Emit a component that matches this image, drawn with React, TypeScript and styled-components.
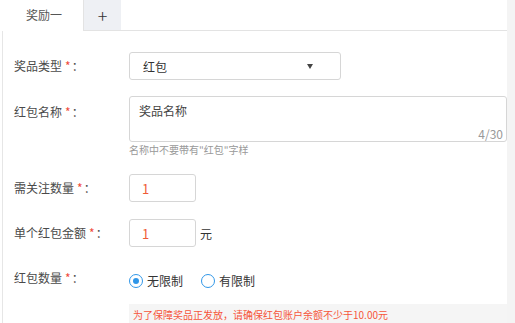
import React from "react";
import styled, { createGlobalStyle } from "styled-components";

const Global = createGlobalStyle`
  html, body { margin: 0; padding: 0; background: #fff; }
  body { font-family: "Noto Sans CJK SC", "Noto Sans", sans-serif; font-size: 12px; color: #333; }
`;

const Page = styled.div`
  display: flex;
  width: 515px;
  height: 323px;
  overflow: hidden;
`;

const Main = styled.div`
  width: 507px;
  display: flex;
  flex-direction: column;
`;

const Strip = styled.div`
  width: 8px;
  background: #f4f4f4;
`;

const TabBar = styled.div`
  display: flex;
  height: 31px;
`;

const Tab = styled.div<{ $active?: boolean }>`
  box-sizing: border-box;
  height: 31px;
  display: flex;
  align-items: center;
  justify-content: center;
  ${(p) =>
    p.$active
      ? `width: 83px; background: #fff; color: #555; font-size: 12px; padding: 0 0 3px 5px;`
      : `width: 38px; background: #eef0f4; border-left: 1px solid #e3e3e3; border-bottom: 1px solid #e3e3e3; color: #333; font-size: 18px; font-weight: 300;`}
`;

const TabFill = styled.div`
  flex: 1;
  border-bottom: 1px solid #e3e3e3;
`;

const Body = styled.div`
  flex: 1;
  margin-left: 2px;
  border-left: 1px solid #e6e6e6;
  padding-left: 11px;
  display: flex;
  flex-direction: column;
`;

const Row = styled.div<{ $top: number; $align?: string }>`
  display: flex;
  align-items: ${(p) => p.$align || "center"};
  margin-top: ${(p) => p.$top}px;
`;

const Label = styled.div<{ $pt?: number }>`
  width: 115px;
  flex: none;
  color: #4a4a4a;
  font-size: 12px;
  line-height: 16px;
  padding-top: ${(p) => p.$pt || 0}px;
  white-space: nowrap;
`;

const Star = styled.span`
  color: #f04b3a;
  margin-left: 3px;
  margin-right: 1px;
`;

const Select = styled.div`
  box-sizing: border-box;
  width: 212px;
  height: 28px;
  border: 1px solid #d6d6d6;
  border-radius: 3px;
  display: flex;
  align-items: center;
  justify-content: space-between;
  padding: 0 27px 0 13px;
  color: #333;
`;

const Caret = styled.span`
  width: 0;
  height: 0;
  border-left: 3px solid transparent;
  border-right: 3px solid transparent;
  border-top: 5px solid #444;
  margin-top: 1px;
`;

const Area = styled.div`
  box-sizing: border-box;
  position: relative;
  width: 379px;
  height: 46px;
  border: 1px solid #d6d6d6;
  border-radius: 3px;
  padding: 6px 9px;
  color: #444;
  line-height: 16px;
`;

const Count = styled.span`
  position: absolute;
  right: 3px;
  bottom: 0px;
  color: #999;
  font-size: 12px;
  line-height: 14px;
`;

const Hint = styled.div`
  margin-left: 115px;
  color: #999;
  font-size: 10px;
  line-height: 16px;
`;

const Input = styled.div`
  box-sizing: border-box;
  width: 67px;
  height: 28px;
  border: 1px solid #d6d6d6;
  border-radius: 3px;
  display: flex;
  align-items: center;
  padding-left: 12px;
  color: #ef5a37;
  font-size: 13px;
`;

const Unit = styled.span`
  margin-left: 4px;
  color: #333;
`;

const Radios = styled.div`
  display: flex;
  align-items: center;
  padding-top: 3px;
`;

const RadioItem = styled.label`
  display: flex;
  align-items: center;
  margin-right: 18px;
  color: #333;
  line-height: 16px;
`;

const Circle = styled.span<{ $on?: boolean }>`
  box-sizing: border-box;
  width: 14px;
  height: 14px;
  border-radius: 50%;
  border: 1px solid #3197e8;
  margin-right: 4px;
  display: flex;
  align-items: center;
  justify-content: center;
  &::after {
    content: "";
    display: ${(p) => (p.$on ? "block" : "none")};
    width: 6px;
    height: 6px;
    border-radius: 50%;
    background: #2f96e8;
  }
`;

const Warn = styled.div`
  margin-top: 15px;
  margin-left: 115px;
  background: #f5f5f5;
  color: #f5553b;
  font-size: 10px;
  line-height: 18px;
  padding: 2px 4px 0;
  height: 20px;
`;

export default function App() {
  return (
    <>
      <Global />
      <Page>
        <Main>
          <TabBar>
            <Tab $active>奖励一</Tab>
            <Tab>+</Tab>
            <TabFill />
          </TabBar>
          <Body>
            <Row $top={21}>
              <Label>奖品类型<Star>*</Star>：</Label>
              <Select>
                <span>红包</span>
                <Caret />
              </Select>
            </Row>
            <Row $top={16} $align="flex-start">
              <Label $pt={8}>红包名称<Star>*</Star>：</Label>
              <Area>
                奖品名称
                <Count>4/30</Count>
              </Area>
            </Row>
            <Hint>名称中不要带有"红包"字样</Hint>
            <Row $top={16}>
              <Label>需关注数量<Star>*</Star>：</Label>
              <Input>1</Input>
            </Row>
            <Row $top={17}>
              <Label>单个红包金额<Star>*</Star>：</Label>
              <Input>1</Input>
              <Unit>元</Unit>
            </Row>
            <Row $top={23} $align="flex-start">
              <Label>红包数量<Star>*</Star>：</Label>
              <Radios>
                <RadioItem><Circle $on />无限制</RadioItem>
                <RadioItem><Circle />有限制</RadioItem>
              </Radios>
            </Row>
            <Warn>为了保障奖品正发放，请确保红包账户余额不少于10.00元</Warn>
          </Body>
        </Main>
        <Strip />
      </Page>
    </>
  );
}
